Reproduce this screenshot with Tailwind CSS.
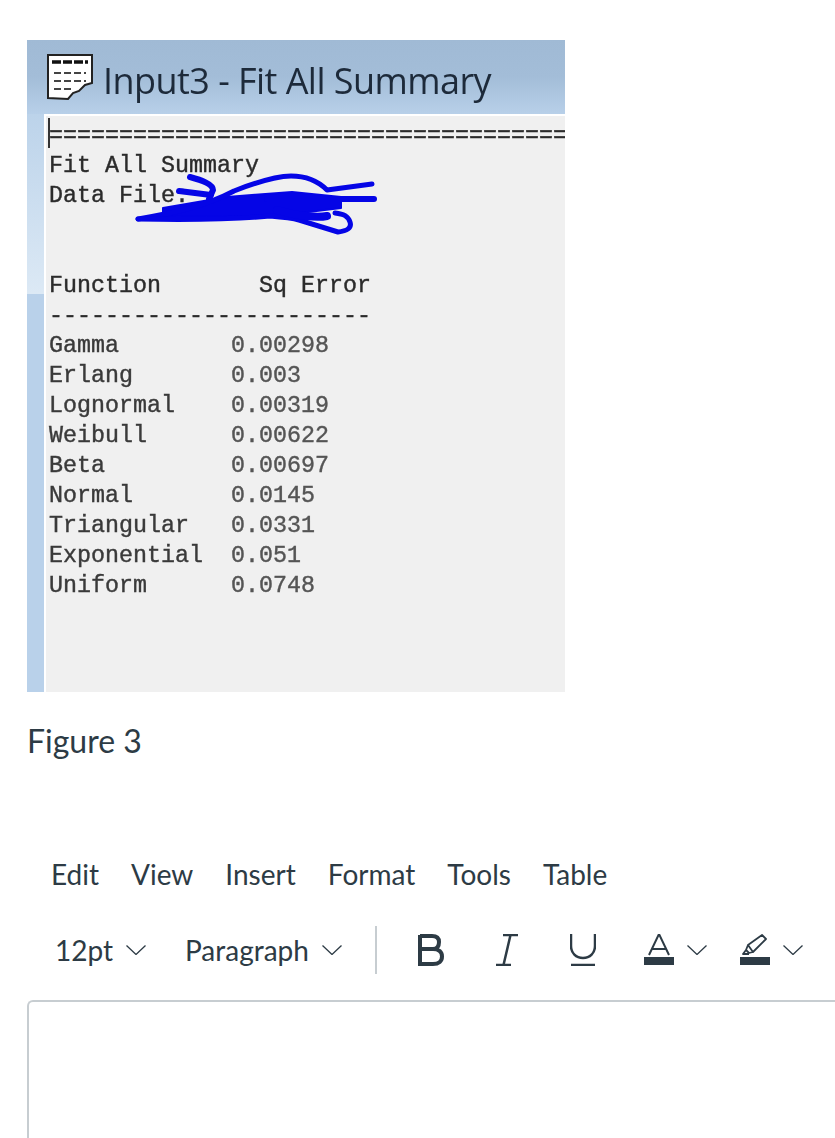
<!DOCTYPE html>
<html lang="en">
<head>
  <meta charset="UTF-8" />
  <meta name="viewport" content="width=device-width, initial-scale=1.0" />
  <script src="https://cdn.jsdelivr.net/npm/@tailwindcss/browser@4"></script>
  <title>Figure 3</title>
</head>
<body class="bg-white text-[#2d3b45] font-['Lato',sans-serif] h-[1138px] overflow-hidden">
  <div class="pt-[40px] pl-[27px]">
    <!-- Screenshot of the fit summary window -->
    <div class="relative w-[538px] h-[652px] overflow-hidden flex flex-col bg-[#b9d1ea] blur-[0.5px]">
      <div class="h-[74px] shrink-0 flex items-center pl-[19px] bg-gradient-to-b from-[#a0bad5] via-[#a3bdd8] to-[#b8d0e9]">
        <svg width="48" height="48" viewBox="0 0 48 48" class="shrink-0" fill="none">
          <path d="M2 2H46V30L39 32L33 38L27 40L22 46L2 45Z" fill="#fff" stroke="#222" stroke-width="2"/>
          <path d="M6 9H42" stroke="#111" stroke-width="3.5" stroke-dasharray="9 2"/>
          <path d="M8 20H40M8 28H40M8 36H26" stroke="#444" stroke-width="2" stroke-dasharray="7 3"/>
        </svg>
        <span class="ml-[9px] font-['Open_Sans',sans-serif] text-[36px] leading-none tracking-[-0.55px] text-[#1d2a3a] mt-[8px]">Input3 - Fit All Summary</span>
      </div>
      <div class="flex-1 flex min-h-0">
        <!-- left window edge -->
        <div class="w-[17px] shrink-0 flex flex-col">
          <div class="h-[180px] bg-gradient-to-b from-[#bcd3ea] to-[#dce9f5]"></div>
          <div class="flex-1 bg-[#b9d1ea]"></div>
        </div>
        <div class="flex-1 min-w-0 bg-[#f0f0f0] border-t-2 border-l-2 border-white overflow-hidden pl-[3px] pt-[5px]">
          <pre class="font-['Liberation_Mono',monospace] text-[23.33px] leading-[30px] text-[#2b2b2b] [-webkit-text-stroke:0.4px] whitespace-pre">=====================================
Fit All Summary
Data File:


Function       Sq Error
-----------------------
<span class="text-[#3a3a3a]">Gamma        <span class="text-[#555]">0.00298</span>
Erlang       <span class="text-[#555]">0.003</span>
Lognormal    <span class="text-[#555]">0.00319</span>
Weibull      <span class="text-[#555]">0.00622</span>
Beta         <span class="text-[#555]">0.00697</span>
Normal       <span class="text-[#555]">0.0145</span>
Triangular   <span class="text-[#555]">0.0331</span>
Exponential  <span class="text-[#555]">0.051</span>
Uniform      <span class="text-[#555]">0.0748</span></span></pre>
        </div>
      </div>
      <!-- text cursor -->
      <div class="absolute left-[21px] top-[78px] w-[2px] h-[30px] bg-[#333]"></div>
      <!-- Blue scribble over the file name -->
      <svg class="absolute left-[100px] top-[120px]" width="260" height="80" viewBox="0 0 260 80" fill="none" stroke="#0505e6" stroke-linecap="round" stroke-linejoin="round">
        <path d="M36 48L100 37L165 32L214 37L214 48L165 54L110 57L36 56Z" fill="#0505e6" stroke-width="2"/>
        <path d="M63 17C74 20 86 24 86 30L82 39" stroke-width="6"/>
        <path d="M52 31L84 35" stroke-width="6"/>
        <path d="M11 59C40 54 75 48 107 31C130 22 150 16 164 16C178 16 190 20 200 30L245 24" stroke-width="5"/>
        <path d="M140 39L247 39" stroke-width="6"/>
        <path d="M11 59C60 60 110 59 143 56C155 57 165 58 172 60L211 72C220 71 225 68 223 62C221 56 217 54 208 53" stroke-width="5"/>
        <path d="M150 50C170 56 190 58 200 56" stroke-width="8"/>
      </svg>
    </div>
    <p class="mt-[29px] h-[40px] leading-[40px] text-[32px] text-[#2d3b45]">Figure 3</p>
  </div>

  <!-- Editor menu bar -->
  <div class="mt-[93px] h-[40px] pl-[51px] flex items-center gap-[32px] text-[28px] text-[#2d3b45]">
    <span>Edit</span><span>View</span><span>Insert</span><span>Format</span><span>Tools</span><span>Table</span>
  </div>

  <!-- Editor toolbar -->
  <div class="mt-[31px] h-[50px] flex items-center text-[28px]">
    <span class="ml-[55px] w-[71px]">12pt</span>
    <svg width="20" height="10" viewBox="0 0 20 10" fill="none" stroke="#2d3b45" stroke-width="1.3"><path d="M0.5 0.5L10 9.5L19.5 0.5"/></svg>
    <span class="ml-[39px] w-[137px]">Paragraph</span>
    <svg width="20" height="10" viewBox="0 0 20 10" fill="none" stroke="#2d3b45" stroke-width="1.3"><path d="M0.5 0.5L10 9.5L19.5 0.5"/></svg>
    <div class="ml-[33px] w-[2px] h-[48px] bg-[#c7cdd1]"></div>
    <svg class="ml-[41px]" width="26" height="32" viewBox="0 0 26 32" fill="none" stroke="#2d3b45" stroke-width="4"><path d="M2 1V30H15C21 30 24 27 24 22.500C24 18 21 15 15 15H2M15 15C19 15 21 12.500 21 8C21 4 18.500 2 14 2H2"/></svg>
    <svg class="ml-[51px]" width="24" height="32" viewBox="0 0 24 32" fill="none" stroke="#2d3b45" stroke-width="2.500"><path d="M8 1H23M1 31H16M15.500 1L8.500 31"/></svg>
    <svg class="ml-[51px]" width="26" height="32" viewBox="0 0 26 32" fill="none" stroke="#2d3b45" stroke-width="2.500"><path d="M1 0V12C1 19 6 24 13 24C20 24 25 19 25 12V0M1 31H25"/></svg>
    <svg class="ml-[48px]" width="30" height="32" viewBox="0 0 30 32" fill="none" stroke="#2d3b45"><path d="M5 21L15 0L25 21M8 15H22" stroke-width="2"/><path d="M0 27H30" stroke-width="8"/></svg>
    <svg class="ml-[13px]" width="20" height="10" viewBox="0 0 20 10" fill="none" stroke="#2d3b45" stroke-width="1.300"><path d="M0.5 0.5L10 9.500L19.500 0.5"/></svg>
    <svg class="ml-[33px]" width="30" height="32" viewBox="0 0 30 32" fill="none" stroke="#2d3b45"><path d="M22 1L26 5L13 18L8 11ZM8 11L6 16L9 19L13 18M6 16L3 20H9" stroke-width="1.800" stroke-linejoin="round"/><path d="M0 27H30" stroke-width="8"/></svg>
    <svg class="ml-[13px]" width="20" height="10" viewBox="0 0 20 10" fill="none" stroke="#2d3b45" stroke-width="1.300"><path d="M0.5 0.5L10 9.500L19.500 0.5"/></svg>
  </div>

  <!-- Editor body, runs off the page -->
  <div class="mt-[25px] ml-[27px] h-[138px] border-t-2 border-l-2 border-[#c7cdd1] rounded-tl-[6px] bg-white"></div>
</body>
</html>
